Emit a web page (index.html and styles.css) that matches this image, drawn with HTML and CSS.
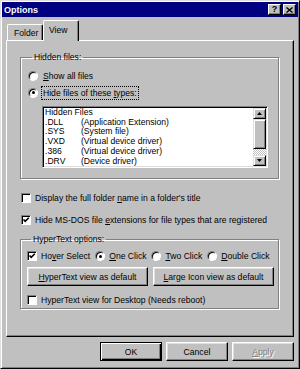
FILE: index.html
```html
<!DOCTYPE HTML>
<html>
<head>
  <meta charset="UTF-8">
  <title>Options</title>
  <link rel="stylesheet" href="styles.css">
</head>
<body>

  <div class="window">
    <div class="titlebar">
      <span class="title">Options</span>
      <div class="caption-buttons">
        <span class="cap-btn help">?</span>
        <span class="cap-btn">
          <svg width="7" height="6" viewBox="0 0 7 6"><path d="M0.5 0.5 L6.5 5.5 M6.5 0.5 L0.5 5.5" stroke="#000" stroke-width="1.4"/></svg>
        </span>
      </div>
    </div>

    <div class="tabs">
      <div class="tab">Folder</div>
      <div class="tab active">View</div>
    </div>

    <div class="panel">
      <fieldset class="group hidden-group">
        <legend>Hidden files:</legend>
        <label class="option"><span class="radio"></span><span><u>S</u>how all files</span></label>
        <label class="option second"><span class="radio checked"></span><span class="focus">Hide files of these <u>t</u>ypes:</span></label>
        <div class="listbox">
          <ul class="list">
            <li>Hidden Files</li>
            <li><span class="ext">.DLL</span>(Application Extension)</li>
            <li><span class="ext">.SYS</span>(System file)</li>
            <li><span class="ext">.VXD</span>(Virtual device driver)</li>
            <li><span class="ext">.386</span>(Virtual device driver)</li>
            <li><span class="ext">.DRV</span>(Device driver)</li>
          </ul>
          <div class="scrollbar">
            <span class="sb-btn">
              <svg width="5" height="3" viewBox="0 0 5 3"><polygon points="2.5,0 5,3 0,3" fill="#000"/></svg>
            </span>
            <span class="sb-thumb"></span>
            <span class="sb-track"></span>
            <span class="sb-btn">
              <svg width="5" height="3" viewBox="0 0 5 3"><polygon points="0,0 5,0 2.5,3" fill="#000"/></svg>
            </span>
          </div>
        </div>
      </fieldset>

      <label class="check-row first"><span class="checkbox"></span><span>Display the full folder <u>n</u>ame in a folder's title</span></label>
      <label class="check-row"><span class="checkbox checked"></span><span>Hide MS-DOS file <u>e</u>xtensions for file types that are registered</span></label>

      <fieldset class="group hyper-group">
        <legend>HyperText options:</legend>
        <div class="hyper-row">
          <label class="choice"><span class="checkbox checked"></span><span>Ho<u>v</u>er Select</span></label>
          <label class="choice"><span class="radio checked"></span><span><u>O</u>ne Click</span></label>
          <label class="choice"><span class="radio"></span><span><u>T</u>wo Click</span></label>
          <label class="choice"><span class="radio"></span><span><u>D</u>ouble Click</span></label>
        </div>
        <div class="hyper-buttons">
          <button class="btn wide"><u>H</u>yperText view as default</button>
          <button class="btn wide"><u>L</u>arge Icon view as default</button>
        </div>
        <label class="choice desktop"><span class="checkbox"></span><span>HyperText view for Desktop (Needs reboot)</span></label>
      </fieldset>
    </div>

    <div class="footer">
      <button class="btn default">OK</button>
      <button class="btn">Cancel</button>
      <button class="btn disabled"><u>A</u>pply</button>
    </div>
  </div>

</body>
</html>
```

FILE: styles.css
```css
body {
  margin: 0;
  font-family: "Liberation Sans", Arial, sans-serif;
  font-size: 8.6px;
  color: #000;
  background: #c0c0c0;
}
u {
  text-underline-offset: 1px;
}
.window {
  width: 300px;
  height: 369px;
  box-sizing: border-box;
  background: #c0c0c0;
  border: 1px solid;
  border-color: #dfdfdf #000 #000 #dfdfdf;
  box-shadow: inset 1px 1px #fff, inset -1px -1px #808080;
  padding: 1px;
  display: flex;
  flex-direction: column;
}
.titlebar {
  height: 15px;
  flex: none;
  background: #000080;
  color: #fff;
  display: flex;
  align-items: center;
  justify-content: space-between;
  padding: 0 2px 0 2px;
}
.title {
  font-weight: bold;
  font-size: 9px;
}
.caption-buttons {
  display: flex;
  gap: 2px;
}
.cap-btn {
  width: 13px;
  height: 11px;
  box-sizing: border-box;
  background: #c0c0c0;
  color: #000;
  border: 1px solid;
  border-color: #fff #000 #000 #fff;
  box-shadow: inset -1px -1px #808080;
  display: flex;
  align-items: center;
  justify-content: center;
}
.help {
  font-weight: bold;
  font-size: 9px;
  line-height: 1;
}

/* tabs */
.tabs {
  display: flex;
  align-items: flex-end;
  height: 20px;
  flex: none;
  margin: 3px 0 0 5px;
}
.tab {
  height: 16px;
  box-sizing: border-box;
  width: 36px;
  padding-left: 6px;
  border: 1px solid;
  border-bottom: 0;
  border-color: #fff #000 #000 #fff;
  border-radius: 2px 2px 0 0;
  box-shadow: inset -1px 0 #808080;
  display: flex;
  align-items: center;
  background: #c0c0c0;
}
.tab.active {
  height: 21px;
  margin-bottom: -1px;
  padding-left: 5px;
  padding-bottom: 2px;
  position: relative;
  z-index: 1;
}

/* panel */
.panel {
  height: 297px;
  flex: none;
  box-sizing: border-box;
  margin: 0 4px;
  padding: 11px 14px 0 13px;
  border: 1px solid;
  border-color: #fff #000 #000 #fff;
  box-shadow: inset -1px -1px #808080;
}
.group {
  margin: 0;
  min-width: 0;
  border: 1px solid #808080;
  box-shadow: inset 1px 1px #fff, 1px 1px #fff;
}
.group legend {
  padding: 0 2px;
  margin-left: 4px;
  line-height: 10px;
}
.hidden-group {
  padding: 7px 9px 10px 7px;
}
.option {
  display: flex;
  align-items: center;
  height: 13px;
  gap: 5px;
}
.option.second {
  margin-top: 4px;
}
.focus {
  outline: 1px dotted #000;
  outline-offset: 1px;
}

.radio {
  width: 10px;
  height: 10px;
  box-sizing: border-box;
  border-radius: 50%;
  background: #fff;
  border: 1px solid;
  border-color: #808080 #fff #fff #808080;
  box-shadow: inset 1px 1px #000;
  display: flex;
  align-items: center;
  justify-content: center;
  flex: none;
}
.radio.checked::after {
  content: "";
  width: 3px;
  height: 3px;
  border-radius: 50%;
  background: #000;
}
.checkbox {
  width: 10px;
  height: 10px;
  box-sizing: border-box;
  background: #fff;
  border: 1px solid;
  border-color: #808080 #fff #fff #808080;
  box-shadow: inset 1px 1px #000;
  flex: none;
}
.checkbox.checked {
  background: #fff url("data:image/svg+xml,%3Csvg xmlns='http://www.w3.org/2000/svg' width='8' height='8' viewBox='0 0 8 8'%3E%3Cpath d='M1.5 3.5 L3.2 5.3 L6.8 1.7' fill='none' stroke='%23000' stroke-width='1.6'/%3E%3C/svg%3E") center/8px 8px no-repeat;
}

/* listbox */
.listbox {
  margin: 7px 0 0 14px;
  width: 226px;
  height: 62px;
  box-sizing: border-box;
  border: 1px solid;
  border-color: #808080 #fff #fff #808080;
  box-shadow: inset 1px 1px #000, inset -1px -1px #dfdfdf;
  padding: 1px;
  display: flex;
  background: #fff;
}
.list {
  list-style: none;
  margin: 0;
  padding: 0 0 0 1px;
  flex: 1;
  overflow: hidden;
  line-height: 9.7px;
}
.ext {
  display: inline-block;
  width: 36px;
}
.scrollbar {
  width: 13px;
  display: flex;
  flex-direction: column;
}
.sb-btn, .sb-thumb {
  box-sizing: border-box;
  background: #c0c0c0;
  border: 1px solid;
  border-color: #dfdfdf #000 #000 #dfdfdf;
  box-shadow: inset 1px 1px #fff, inset -1px -1px #808080;
}
.sb-btn {
  height: 11px;
  display: flex;
  align-items: center;
  justify-content: center;
}
.sb-thumb {
  height: 30px;
}
.sb-track {
  flex: 1;
  background: repeating-conic-gradient(#fff 0 25%, #c0c0c0 0 50%) 0 0/2px 2px;
}

/* checkboxes */
.check-row {
  display: flex;
  align-items: center;
  height: 12px;
  gap: 4px;
  margin: 10px 0 0 1px;
}
.check-row.first {
  margin-top: 13px;
}

/* hypertext */
.hyper-group {
  margin-top: 8px;
  padding: 6px 4px 2px 6px;
}
.hyper-row {
  display: flex;
  align-items: center;
  height: 12px;
  gap: 5px;
}
.choice {
  display: flex;
  align-items: center;
  gap: 4px;
}
.hyper-buttons {
  display: flex;
  gap: 5px;
  margin-top: 5px;
}
.desktop {
  height: 12px;
  margin-top: 8px;
}

/* buttons */
.btn {
  font-family: inherit;
  font-size: inherit;
  color: #000;
  height: 19px;
  width: 62px;
  padding: 0;
  background: #c0c0c0;
  border: 1px solid;
  border-color: #fff #000 #000 #fff;
  box-shadow: inset -1px -1px #808080, inset 1px 1px #dfdfdf;
}
.btn.wide {
  width: 121px;
}
.btn.default {
  border-color: #000;
  box-shadow: inset 1px 1px #fff, inset -1px -1px #000, inset -2px -2px #808080;
}
.btn.disabled {
  color: #808080;
  text-shadow: 1px 1px #fff;
}
.footer {
  display: flex;
  justify-content: flex-end;
  gap: 4px;
  padding: 5px 4px 0 0;
}
```
